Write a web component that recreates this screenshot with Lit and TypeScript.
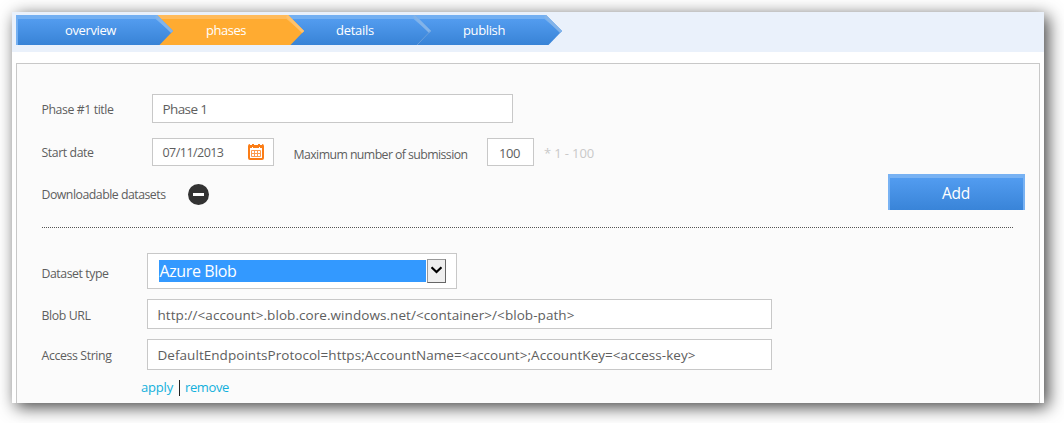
import { LitElement, html, css, svg } from "lit";
import { customElement, property } from "lit/decorators.js";

/** A single line of text whose tracking is adjusted to fill a given width. */
@customElement("fit-text")
class FitText extends LitElement {
  @property({ type: Number }) width = 0;

  static styles = css`
    :host { display: block; flex: none; line-height: 18px; height: 16px; white-space: pre; }
    span { display: inline-block; }
  `;

  render() {
    return html`<span><slot></slot></span>`;
  }

  firstUpdated() {
    const span = this.renderRoot.querySelector("span") as HTMLElement;
    const count = (this.textContent || "").length;
    const natural = span.getBoundingClientRect().width;
    if (this.width && count) {
      span.style.letterSpacing = `${(this.width - natural) / count}px`;
    }
  }
}

const steps = [
  { name: "overview", w: 157, label: 51, kind: "blue", first: true },
  { name: "phases", w: 147, label: 40, kind: "orange", first: false },
  { name: "details", w: 144, label: 38, kind: "blue", first: false },
  { name: "publish", w: 148, label: 42, kind: "blue", first: false },
];

@customElement("step-bar")
class StepBar extends LitElement {
  static styles = css`
    :host { display: flex; height: 30px; color: #fff; font-size: 13px; }
    .step { position: relative; height: 30px; flex: none; }
    .overview { width: 157px; z-index: 4; }
    .phases { width: 147px; margin-left: -16px; z-index: 3; }
    .details { width: 144px; margin-left: -17px; z-index: 2; }
    .publish { width: 148px; margin-left: -17px; z-index: 1; }
    svg { position: absolute; left: 0; top: 0; }
    fit-text { position: relative; padding-top: 6px; margin-left: 49px; }
  `;

  shape(s: (typeof steps)[number]) {
    const w = s.w;
    const fill = s.kind === "orange" ? "#ffab31" : "url(#g)";
    return html`<svg width=${w} height="30" viewBox="0 0 ${w} 30">
      <defs>
        <linearGradient id="g" x1="0" y1="0" x2="0" y2="1">
          <stop offset="0.1" stop-color="#549df0" /><stop offset="1" stop-color="#3883d6" />
        </linearGradient>
      </defs>
      ${svg`<path d="M0 0H${w - 16}L${w} 16L${w - 13.5} 30H0Z" fill=${fill} />
      <path d="M0 0H${w - 16}L${w} 16L${w - 1.5} 17.5L${w - 17.5} 4H0Z" fill=${s.kind === "orange" ? "#ffbb5c" : "#74b0f2"} />
      <path d="M${w - 16} 0L${w} 16L${w - 2} 18L${w - 18} 2Z" fill=${s.kind === "orange" ? "#ffc26c" : "#83b3e8"} />
      ${s.name === "details" ? svg`<path d="M${w - 0.5} 16L${w - 14} 30" stroke="#6a9fdb" stroke-width="1" />` : ""}
      ${s.first ? svg`<path d="M0 0H2V30H0Z" fill="#74b0f2" />` : ""}`}
    </svg>`;
  }

  render() {
    return steps.map(
      (s) => html`<div class="step ${s.name}">${this.shape(s)}<fit-text width=${s.label}>${s.name}</fit-text></div>`
    );
  }
}

@customElement("app-root")
class AppRoot extends LitElement {
  static styles = css`
    :host {
      display: block; box-sizing: border-box; width: 1064px; height: 423px; padding: 12px 20px 20px 12px;
      overflow: hidden; background: #fff; color: #5e5e5e;
      font-family: "Open Sans", "Noto Sans", sans-serif; font-size: 12.3px;
    }
    * { box-sizing: border-box; }
    .window { width: 1032px; height: 391px; background: #fff; box-shadow: 4px 4px 16px 0 rgba(0, 0, 0, 0.75); display: flex; flex-direction: column; }
    .band { height: 40px; background: #eaf1fb; padding: 3px 4px; flex: none; }
    .panel { margin: 11px 4px 0; flex: 1; border: 1px solid #c8c8c8; border-bottom: 0; background: #fbfbfb; padding: 30px 14px 0 25px; }
    .row { display: flex; align-items: flex-start; }
    .box { border: 1px solid #c8c8c8; background: #fff; display: flex; align-items: flex-start; padding-left: 9.5px; flex: none; font-size: 13.5px; }
    .wide { width: 110px; padding-top: 7px; flex: none; }
    .narrow { width: 105px; padding-top: 7px; flex: none; }
    .wide fit-text, .narrow fit-text { margin-left: -0.5px; }
    .title { height: 29px; }
    .title .box { width: 361px; height: 29px; padding-top: 5px; }
    .dates { height: 28px; margin-top: 15px; }
    .dates .wide { padding-top: 6px; }
    .dates .box { height: 28px; }
    .date { width: 122px; padding-top: 5px; font-size: 12.5px; }
    .date svg { margin-left: 24.5px; }
    .max { margin: 8px 0 0 19.5px; width: 193.5px; }
    .count { width: 47px; padding: 5px 0 0 11px; font-size: 13px; }
    .hint { color: #c9c9c9; margin: 6px 0 0 10px; font-size: 13px; }
    .sets { height: 36px; margin-top: 8px; }
    .sets .wide { width: 146px; padding-top: 12px; }
    .sets svg { margin-top: 10px; }
    .add {
      width: 137px; height: 36px; margin-left: auto; border: solid #78b2f3; border-width: 4px 2px 0;
      background: linear-gradient(#529cf0, #3984d8); color: #fff; font-size: 15.5px; padding: 6px 0 0 52px;
    }
    .rule { width: 971px; height: 1px; margin: 17px 0 25px; background: repeating-linear-gradient(90deg, #555 0 1px, transparent 1px 2px); }
    .type { height: 36px; }
    .type .narrow { padding-top: 12px; }
    .type .box { width: 310px; height: 36px; padding: 6px 0 0 11px; gap: 1px; }
    .chosen { width: 267px; height: 22px; background: #3399ff; color: #fff; font-size: 16px; padding: 2px 0 0 0.5px; }
    .arrow { width: 19px; height: 24px; margin-top: -1px; border: 1px solid #999; border-right-color: #666; border-bottom-color: #666; background: #efefef; padding: 6px 0 0 3px; }
    svg { display: block; flex: none; }
    .url { height: 30px; margin-top: 10px; }
    .url .narrow { padding-top: 8px; }
    .url .box { width: 625px; height: 30px; padding-top: 6px; }
    .access { height: 31px; margin-top: 10px; }
    .access .narrow { padding-top: 8px; }
    .access .box { width: 625px; height: 31px; padding-top: 6px; }
    .links { padding: 8px 0 0 99px; color: #12b0dc; font-size: 13px; }
    .apply { width: 38px; }
    .bar { width: 1px; height: 16px; margin: 2px 5px 0 0; background: #222; }
  `;

  render() {
    return html`<div class="window">
      <div class="band"><step-bar></step-bar></div>
      <div class="panel">
        <div class="row title">
          <div class="wide"><fit-text width="72">Phase #1 title</fit-text></div>
          <div class="box"><fit-text width="45">Phase 1</fit-text></div>
        </div>
        <div class="row dates">
          <div class="wide"><fit-text width="52">Start date</fit-text></div>
          <div class="box date">
            <fit-text width="61">07/11/2013</fit-text>
            <svg width="16" height="16" viewBox="0 0 16 16">
              <rect x="1" y="1" width="14" height="14" rx="1" fill="#fff" stroke="#fb7d17" stroke-width="2" />
              <path d="M2 2H14V4H2Z" fill="#fb7d17" />
              <path d="M2 0H4V1H2ZM6 0H10V1H6ZM12 0H14V1H12ZM4 3H5V4H4ZM11 3H12V4H11Z" fill="#fff" />
              <path d="M3.5 6.5H12.5V12.5H3.5ZM3.5 9.5H12.5M6.5 6.5V12.5M9.5 6.5V12.5" fill="none" stroke="#fc9a4d" stroke-width="1" />
            </svg>
          </div>
          <div class="max"><fit-text width="174">Maximum number of submission</fit-text></div>
          <div class="box count"><fit-text width="21">100</fit-text></div>
          <div class="hint"><fit-text width="50">* 1 - 100</fit-text></div>
        </div>
        <div class="row sets">
          <div class="wide"><fit-text width="124">Downloadable datasets</fit-text></div>
          <svg width="21" height="21" viewBox="0 0 21 21">
            <circle cx="10.5" cy="10.5" r="10.5" fill="#333" />
            <path d="M5 9H16V12H5Z" fill="#fff" />
          </svg>
          <div class="add"><fit-text width="28">Add</fit-text></div>
        </div>
        <div class="rule"></div>
        <div class="row type">
          <div class="narrow"><fit-text width="67">Dataset type</fit-text></div>
          <div class="box">
            <div class="chosen"><fit-text width="77">Azure Blob</fit-text></div>
            <div class="arrow">
              <svg width="11" height="8" viewBox="0 0 11 8"><path d="M0.5 1.2L5.5 6L10.5 1.2" fill="none" stroke="#000" stroke-width="2.2" /></svg>
            </div>
          </div>
        </div>
        <div class="row url">
          <div class="narrow"><fit-text width="49">Blob URL</fit-text></div>
          <div class="box"><fit-text width="417">http://&lt;account&gt;.blob.core.windows.net/&lt;container&gt;/&lt;blob-path&gt;</fit-text></div>
        </div>
        <div class="row access">
          <div class="narrow"><fit-text width="70">Access String</fit-text></div>
          <div class="box"><fit-text width="538">DefaultEndpointsProtocol=https;AccountName=&lt;account&gt;;AccountKey=&lt;access-key&gt;</fit-text></div>
        </div>
        <div class="row links">
          <div class="apply"><fit-text width="32">apply</fit-text></div>
          <div class="bar"></div>
          <fit-text width="44">remove</fit-text>
        </div>
      </div>
    </div>`;
  }
}
